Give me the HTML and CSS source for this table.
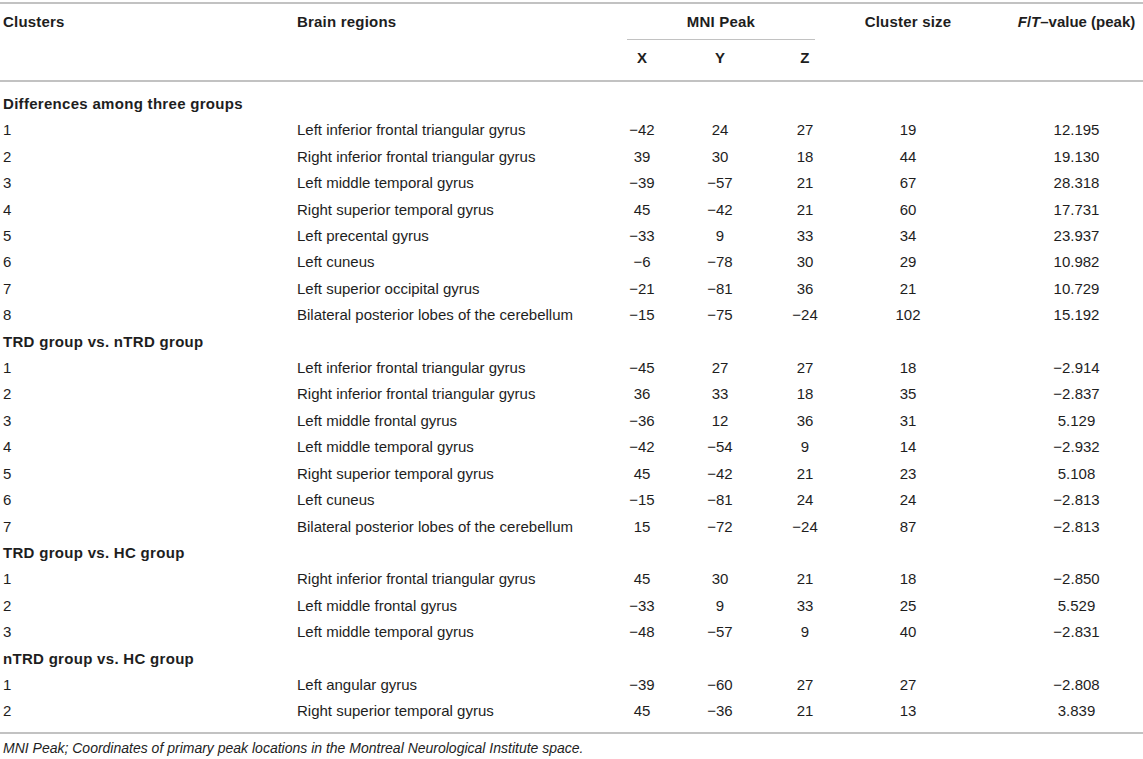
FILE: index.html
```html
<!DOCTYPE html>
<html lang="en">
<head>
<meta charset="utf-8">
<title>Table</title>
<link rel="stylesheet" href="styles.css">
</head>
<body>
<div class="wrap">
<table class="tbl">
  <colgroup>
    <col class="c-cluster">
    <col class="c-region">
    <col class="c-x">
    <col class="c-y">
    <col class="c-z">
    <col class="c-size">
    <col class="c-val">
  </colgroup>
  <thead>
    <tr>
      <th rowspan="2" class="h-left h-first">Clusters</th>
      <th rowspan="2" class="h-left h-region">Brain regions</th>
      <th colspan="3" class="mni"><div class="mni-label">MNI Peak</div></th>
      <th rowspan="2" class="h-center">Cluster size</th>
      <th rowspan="2" class="h-center h-val"><i>F</i>/<i>T</i>–value (peak)</th>
    </tr>
    <tr>
      <th class="h-axis">X</th>
      <th class="h-axis">Y</th>
      <th class="h-axis">Z</th>
    </tr>
  </thead>
  <tbody>
    <tr class="grp"><td colspan="7">Differences among three groups</td></tr>
    <tr><td>1</td><td>Left inferior frontal triangular gyrus</td><td>−42</td><td>24</td><td>27</td><td>19</td><td>12.195</td></tr>
    <tr><td>2</td><td>Right inferior frontal triangular gyrus</td><td>39</td><td>30</td><td>18</td><td>44</td><td>19.130</td></tr>
    <tr><td>3</td><td>Left middle temporal gyrus</td><td>−39</td><td>−57</td><td>21</td><td>67</td><td>28.318</td></tr>
    <tr><td>4</td><td>Right superior temporal gyrus</td><td>45</td><td>−42</td><td>21</td><td>60</td><td>17.731</td></tr>
    <tr><td>5</td><td>Left precental gyrus</td><td>−33</td><td>9</td><td>33</td><td>34</td><td>23.937</td></tr>
    <tr><td>6</td><td>Left cuneus</td><td>−6</td><td>−78</td><td>30</td><td>29</td><td>10.982</td></tr>
    <tr><td>7</td><td>Left superior occipital gyrus</td><td>−21</td><td>−81</td><td>36</td><td>21</td><td>10.729</td></tr>
    <tr><td>8</td><td>Bilateral posterior lobes of the cerebellum</td><td>−15</td><td>−75</td><td>−24</td><td>102</td><td>15.192</td></tr>
    <tr class="grp"><td colspan="7">TRD group vs. nTRD group</td></tr>
    <tr><td>1</td><td>Left inferior frontal triangular gyrus</td><td>−45</td><td>27</td><td>27</td><td>18</td><td>−2.914</td></tr>
    <tr><td>2</td><td>Right inferior frontal triangular gyrus</td><td>36</td><td>33</td><td>18</td><td>35</td><td>−2.837</td></tr>
    <tr><td>3</td><td>Left middle frontal gyrus</td><td>−36</td><td>12</td><td>36</td><td>31</td><td>5.129</td></tr>
    <tr><td>4</td><td>Left middle temporal gyrus</td><td>−42</td><td>−54</td><td>9</td><td>14</td><td>−2.932</td></tr>
    <tr><td>5</td><td>Right superior temporal gyrus</td><td>45</td><td>−42</td><td>21</td><td>23</td><td>5.108</td></tr>
    <tr><td>6</td><td>Left cuneus</td><td>−15</td><td>−81</td><td>24</td><td>24</td><td>−2.813</td></tr>
    <tr><td>7</td><td>Bilateral posterior lobes of the cerebellum</td><td>15</td><td>−72</td><td>−24</td><td>87</td><td>−2.813</td></tr>
    <tr class="grp"><td colspan="7">TRD group vs. HC group</td></tr>
    <tr><td>1</td><td>Right inferior frontal triangular gyrus</td><td>45</td><td>30</td><td>21</td><td>18</td><td>−2.850</td></tr>
    <tr><td>2</td><td>Left middle frontal gyrus</td><td>−33</td><td>9</td><td>33</td><td>25</td><td>5.529</td></tr>
    <tr><td>3</td><td>Left middle temporal gyrus</td><td>−48</td><td>−57</td><td>9</td><td>40</td><td>−2.831</td></tr>
    <tr class="grp"><td colspan="7">nTRD group vs. HC group</td></tr>
    <tr><td>1</td><td>Left angular gyrus</td><td>−39</td><td>−60</td><td>27</td><td>27</td><td>−2.808</td></tr>
    <tr><td>2</td><td>Right superior temporal gyrus</td><td>45</td><td>−36</td><td>21</td><td>13</td><td>3.839</td></tr>
  </tbody>
</table>
<p class="note">MNI Peak; Coordinates of primary peak locations in the Montreal Neurological Institute space.</p>
</div>
</body>
</html>
```

FILE: styles.css
```css
html, body {
  margin: 0;
  padding: 0;
  background: #ffffff;
}

body {
  font-family: "Liberation Sans", Arial, Helvetica, sans-serif;
  color: #1e1e1e;
  font-size: 15px;
}

.wrap {
  padding-top: 2px;
  width: 1143px;
}

.tbl {
  width: 1143px;
  table-layout: fixed;
  border-collapse: separate;
  border-spacing: 0;
  border-top: 2px solid #c2c2c2;
  border-bottom: 2px solid #c2c2c2;
}

.c-cluster { width: 294px; }
.c-region { width: 310px; }
.c-x { width: 76px; }
.c-y { width: 80px; }
.c-z { width: 90px; }
.c-size { width: 116px; }
.c-val { width: 177px; }

th {
  font-weight: bold;
  line-height: 20px;
  vertical-align: top;
  padding: 8px 0 0 0;
  white-space: nowrap;
  letter-spacing: 0.2px;
}

.h-left { text-align: left; }
.h-first { padding-left: 3px; }
.h-region { padding-left: 3px; }
.h-center { text-align: center; }
.h-val { padding-left: 44px; letter-spacing: 0; }

.mni {
  padding: 8px 0 0 0;
  text-align: center;
}

.mni-label {
  margin: 0 35px 0 23px;
  padding-bottom: 7px;
  border-bottom: 1px solid #c2c2c2;
}

.h-axis {
  text-align: center;
  padding: 8px 0 12px 0;
}

td {
  padding: 0;
  line-height: 26.4px;
  height: 26.4px;
  text-align: center;
  white-space: nowrap;
}

td:first-child {
  text-align: left;
  padding-left: 3px;
}

td:nth-child(2) {
  text-align: left;
  padding-left: 3px;
}

td:nth-child(7) {
  padding-left: 44px;
}

.grp td {
  font-weight: bold;
  letter-spacing: 0.3px;
}

tbody tr:first-child td {
  border-top: 2px solid #c2c2c2;
  padding-top: 9px;
}

tbody tr:last-child td {
  padding-bottom: 7px;
}

.note {
  margin: 6px 0 0 0;
  padding-left: 3px;
  font-size: 14px;
  line-height: 17px;
  font-style: italic;
}
```
